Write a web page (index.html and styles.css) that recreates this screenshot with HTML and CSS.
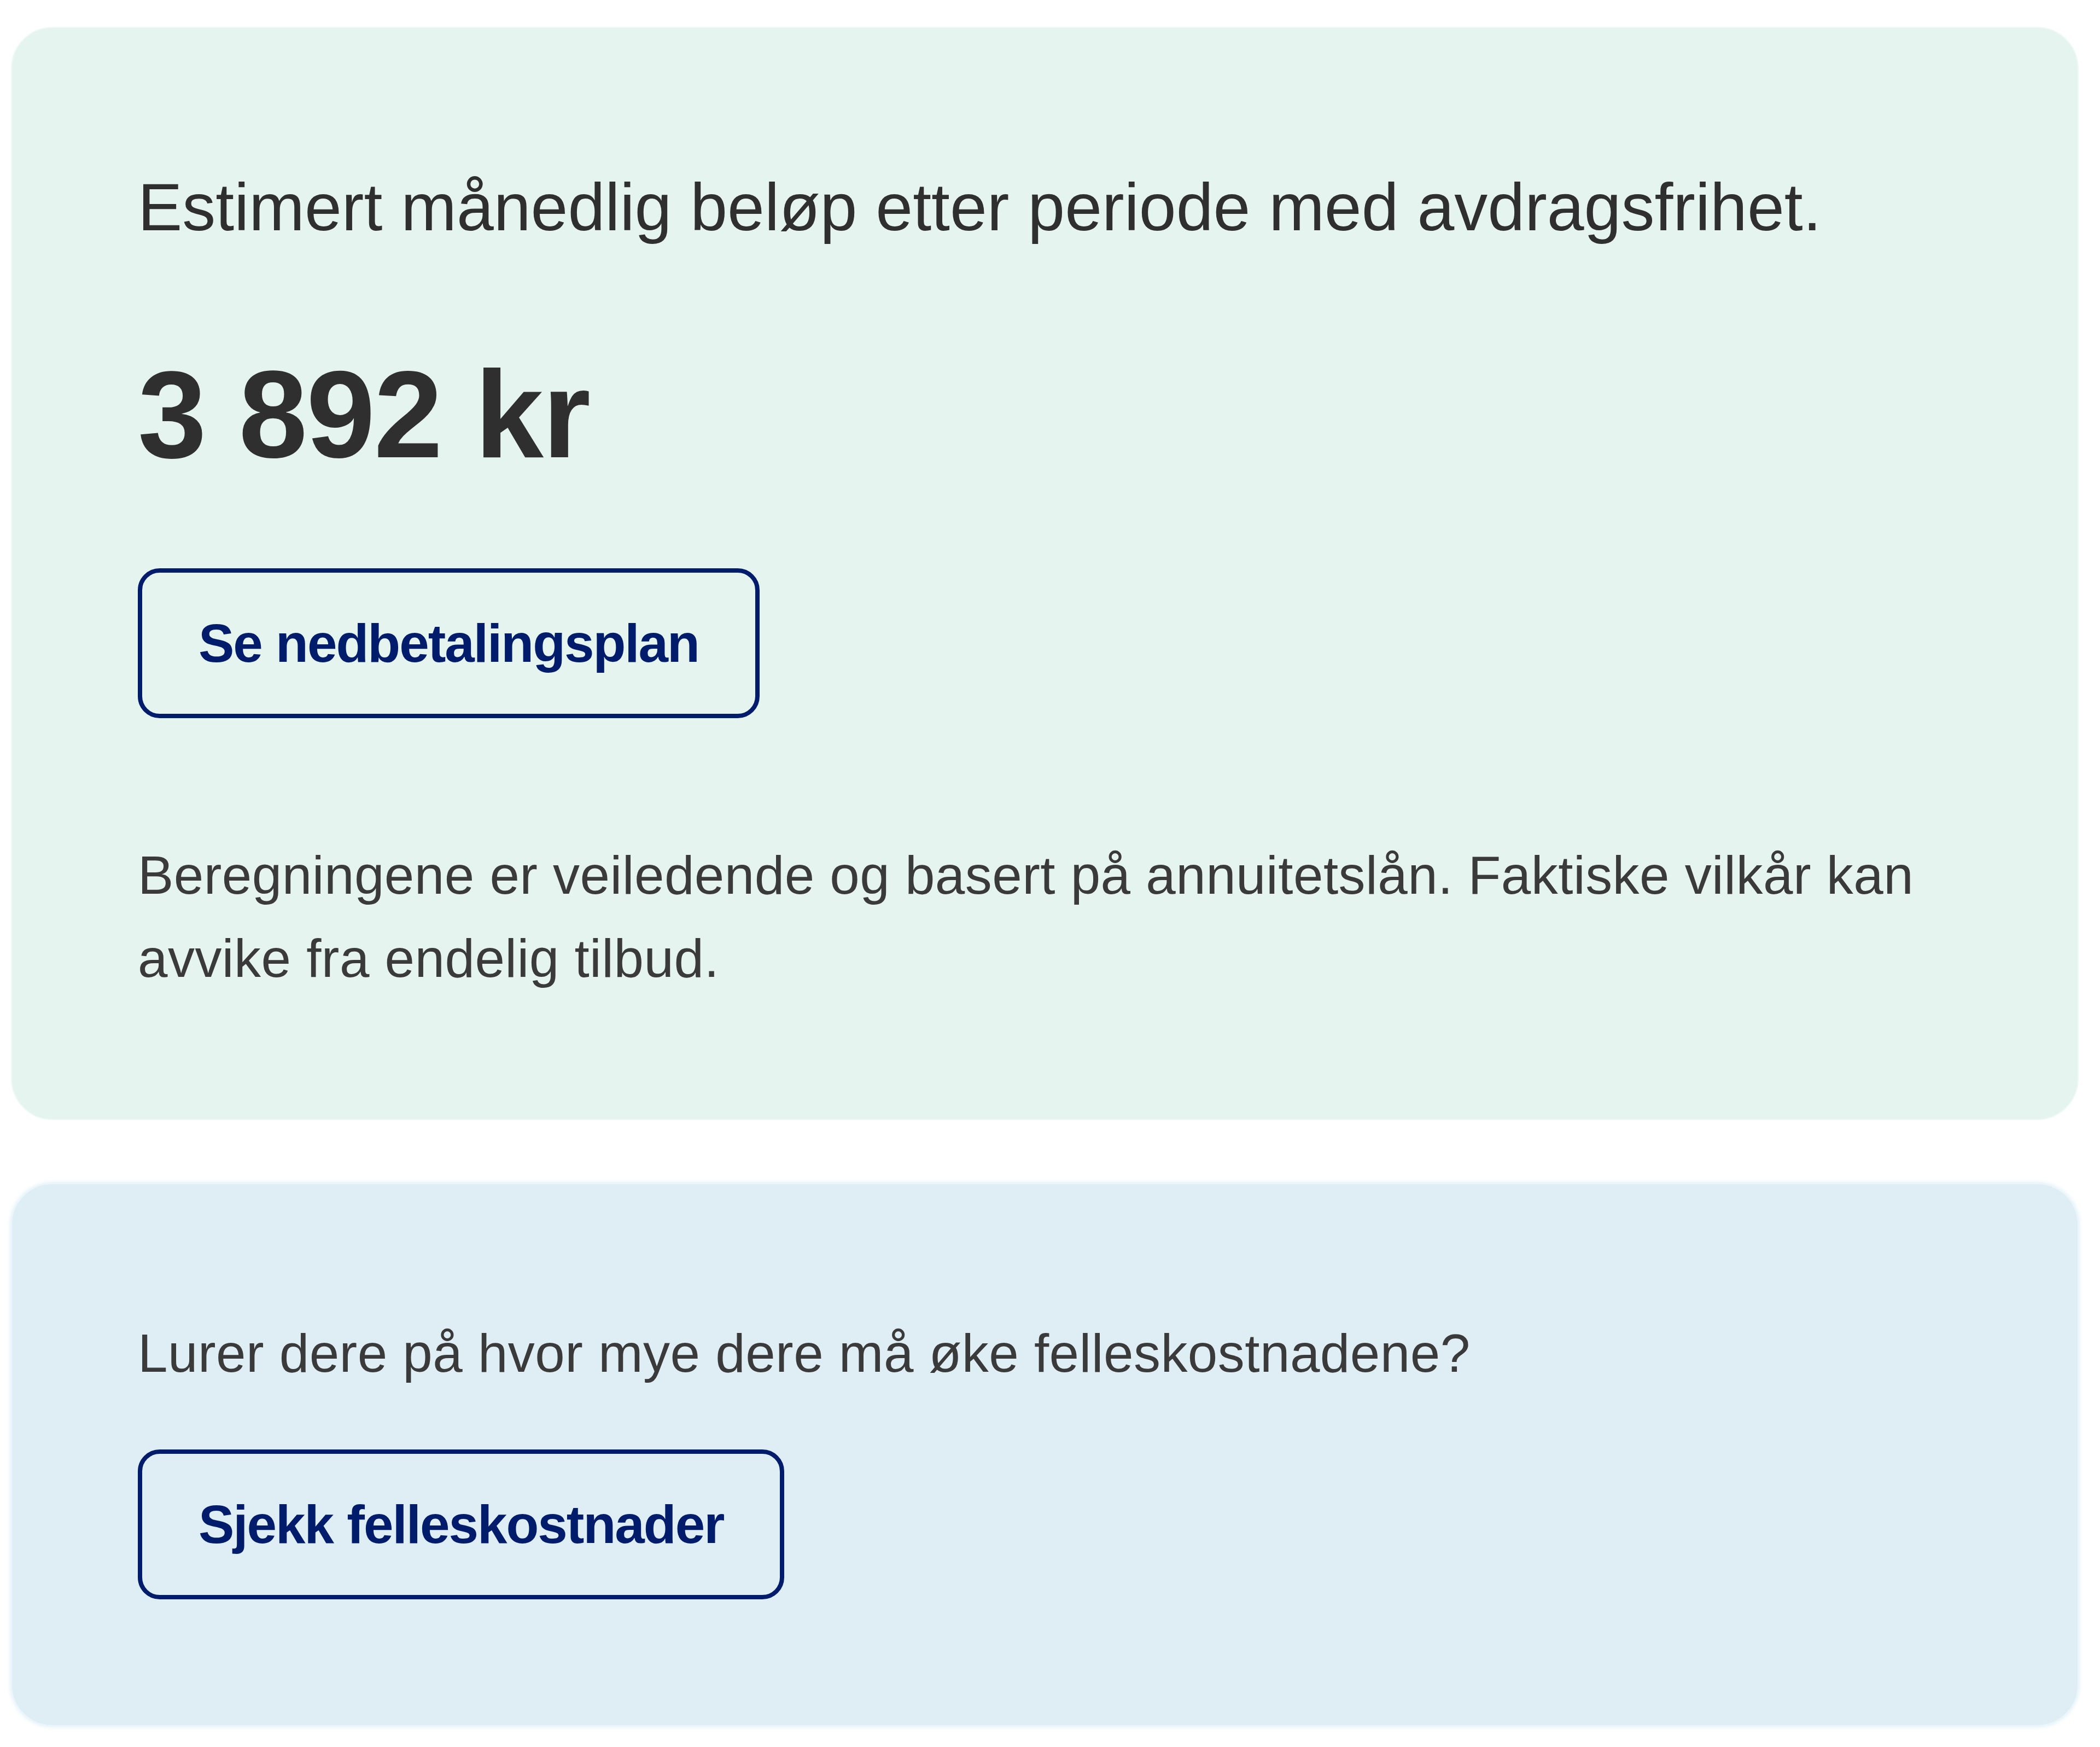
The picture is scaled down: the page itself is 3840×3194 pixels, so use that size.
FILE: index.html
```html
<!DOCTYPE html>
<html lang="no">
<head>
    <meta charset="UTF-8">
    <meta name="viewport" content="width=device-width, initial-scale=1.0">
    <title>Lånekalkulator</title>
    <link rel="stylesheet" href="styles.css">
</head>
<body>
    <div class="results">

        <!-- Estimated monthly payment -->
        <section class="card card-result">
            <h2 class="result-title">Estimert månedlig beløp etter periode med avdragsfrihet.</h2>
            <p class="result-amount">3 892 kr</p>
            <button class="btn-outline">Se nedbetalingsplan</button>
            <p class="disclaimer">Beregningene er veiledende og basert på annuitetslån. Faktiske vilkår kan avvike fra endelig tilbud.</p>
        </section>

        <!-- Shared costs -->
        <section class="card card-info">
            <p class="info-text">Lurer dere på hvor mye dere må øke felleskostnadene?</p>
            <button class="btn-outline">Sjekk felleskostnader</button>
        </section>

    </div>
</body>
</html>
```

FILE: styles.css
```css
body {
    margin: 0;
    padding: 49px 39px 35px 20px;
    background-color: white;
    font-family: "Liberation Sans", Arial, sans-serif;
    color: #2f2f2f;
}

.results {
    display: flex;
    flex-direction: column;
    gap: 115px;
}

.card {
    display: flex;
    flex-direction: column;
    align-items: flex-start;
    border-radius: 76px;
    padding: 232px 232px 230px 230px;
}

.card-result {
    background-color: #e5f4ef;
    border: 2px solid #effaf7;
    padding-top: 248px;
    padding-bottom: 218px;
}

.card-info {
    background-color: #dfeef5;
    border: 2px solid #e9f6fb;
    box-shadow: 0 0 8px rgba(190, 222, 238, 0.6);
    padding-top: 233px;
}

.result-title {
    margin: 0;
    font-size: 122px;
    font-weight: normal;
    line-height: 160px;
    color: #2f2f2f;
}

.result-amount {
    margin: 163px 0 0 0;
    font-size: 226px;
    font-weight: bold;
    line-height: 271px;
    letter-spacing: -2px;
    color: #2f2f2f;
}

.btn-outline {
    margin-top: 146px;
    padding: 69px 103px;
    background-color: transparent;
    border: 8px solid #001c6b;
    border-radius: 40px;
    font-family: "Liberation Sans", Arial, sans-serif;
    font-size: 98px;
    font-weight: bold;
    line-height: 120px;
    letter-spacing: -2px;
    color: #001c6b;
    cursor: pointer;
}

.disclaimer {
    margin: 211px 0 0 0;
    font-size: 98px;
    line-height: 152px;
    letter-spacing: 0.45px;
    color: #3a3a3a;
}

.info-text {
    margin: 0;
    font-size: 98px;
    line-height: 152px;
    letter-spacing: 0.45px;
    color: #3a3a3a;
}

.card-info .btn-outline {
    margin-top: 100px;
}
```
